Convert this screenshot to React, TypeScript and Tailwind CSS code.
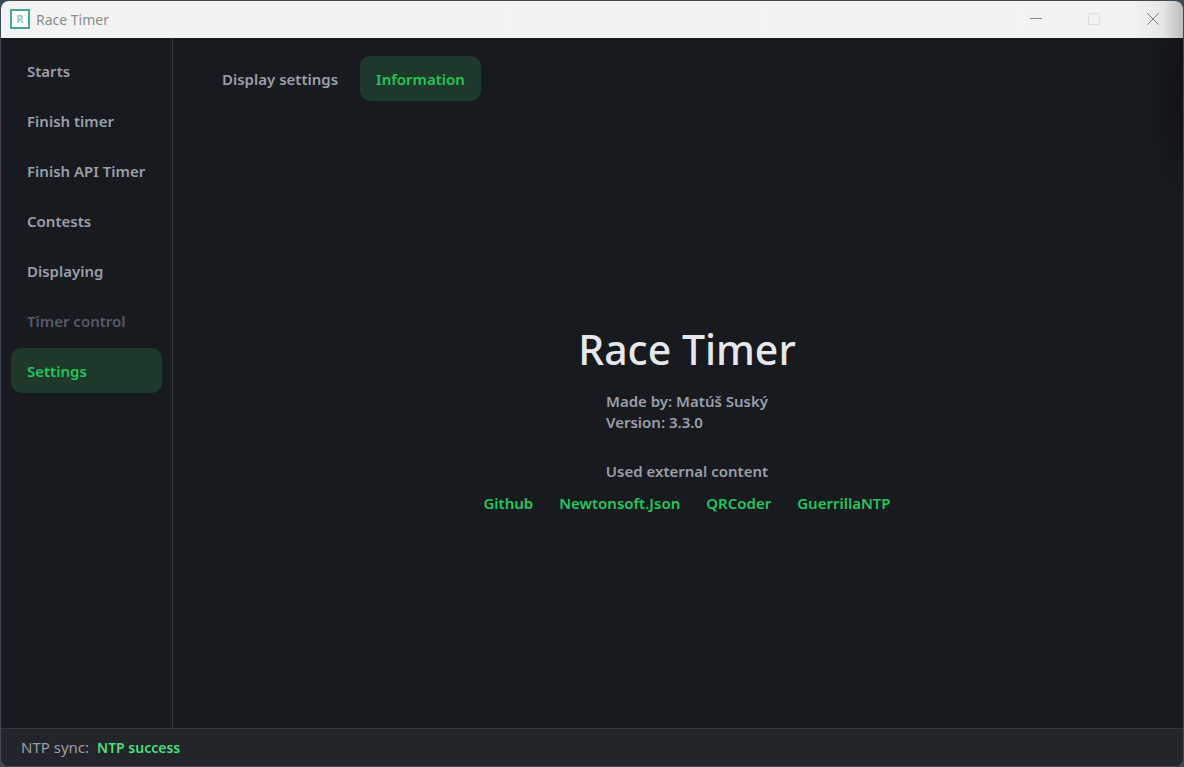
import { useState } from "react";

const navItems = [
  { label: "Starts" },
  { label: "Finish timer" },
  { label: "Finish API Timer" },
  { label: "Contests" },
  { label: "Displaying" },
  { label: "Timer control", disabled: true },
  { label: "Settings" },
];

const tabs = ["Display settings", "Information"];

const links = [
  { label: "Github", href: "https://github.com" },
  { label: "Newtonsoft.Json", href: "https://www.newtonsoft.com/json" },
  { label: "QRCoder", href: "https://github.com/codebude/QRCoder" },
  { label: "GuerrillaNTP", href: "https://guerrillantp.machinezoo.com" },
];

function TitleBar() {
  return (
    <header className="flex h-[37px] shrink-0 items-center bg-linear-to-l from-[#bcbcbc] via-[#e6e6e6] via-[20px] to-[#f3f3f3] to-[50px] pb-px pl-[9px]">
      <svg width="20" height="20" viewBox="0 0 20 20" aria-hidden="true">
        <rect x="1" y="1" width="18" height="18" fill="#fff" stroke="#43a897" strokeWidth="2" />
        <text
          x="10"
          y="14"
          textAnchor="middle"
          fontSize="11"
          fontWeight="700"
          fill="#8fcbbf"
          className="font-['Open_Sans',sans-serif]"
        >
          R
        </text>
      </svg>
      <span className="ml-[6px] text-[14px] font-normal text-[#8b8b8b]">Race Timer</span>
      <div className="ml-auto flex h-full">
        <button type="button" aria-label="Minimize" className="flex w-[58px] items-center justify-center">
          <svg width="12" height="12" viewBox="0 0 12 12">
            <path d="M0 5.5h12" stroke="#8a8a8a" />
          </svg>
        </button>
        <button type="button" aria-label="Maximize" disabled className="flex w-[58px] items-center justify-center">
          <svg width="12" height="12" viewBox="0 0 12 12">
            <rect x=".5" y=".5" width="11" height="11" rx="1" fill="none" stroke="#dedede" />
          </svg>
        </button>
        <button type="button" aria-label="Close" className="flex w-[60px] items-center justify-center">
          <svg width="12" height="12" viewBox="0 0 12 12">
            <path d="M.3.3l11.4 11.4M11.7.3L.3 11.7" stroke="#7c7c7c" />
          </svg>
        </button>
      </div>
    </header>
  );
}

export default function App() {
  const [page, setPage] = useState("Settings");
  const [tab, setTab] = useState("Information");

  return (
    <div className="flex h-screen bg-[#3f4a52] p-px font-['Noto_Sans','Open_Sans',sans-serif]">
      <div className="flex flex-1 flex-col overflow-hidden rounded-lg bg-[#171a1e] text-[15px] font-semibold text-[#9a9fa8]">
        <TitleBar />

        <div className="flex min-h-0 flex-1">
          <nav className="flex w-[172px] shrink-0 flex-col gap-[5px] border-r border-[#34383d] px-[10px] pt-[10px]">
            {navItems.map((item) => (
              <button
                key={item.label}
                type="button"
                disabled={item.disabled}
                onClick={() => setPage(item.label)}
                className={`h-[45px] rounded-[10px] px-4 pt-0.5 text-left whitespace-nowrap ${
                  page === item.label ? "bg-[#1e3829] text-[#22c55e]" : ""
                } disabled:text-[#565b65]`}
              >
                {item.label}
              </button>
            ))}
          </nav>

          <main className="flex flex-1 flex-col bg-[radial-gradient(ellipse_36px_110px_at_100%_8%,#111214,#171a1e)] pt-[18px] pr-[15px] pl-[33px]">
            <div className="flex gap-[6px]">
              {tabs.map((name) => (
                <button
                  key={name}
                  type="button"
                  onClick={() => setTab(name)}
                  className={`h-[45px] rounded-[10px] px-4 pt-0.5 ${
                    tab === name ? "bg-[#1e3829] text-[#22c55e]" : ""
                  }`}
                >
                  {name}
                </button>
              ))}
            </div>

            <section className="flex flex-1 flex-col items-center justify-center pt-2">
              <h1 className="text-[41px] leading-[52px] font-medium text-[#e6e7eb]">Race Timer</h1>
              <div className="mt-4 leading-[21px]">
                <p>Made by: Matúš Suský</p>
                <p>Version: 3.3.0</p>
              </div>
              <h2 className="mt-7 leading-[21px]">Used external content</h2>
              <div className="mt-[11px] flex gap-[26px] leading-[21px] text-[#22c55e]">
                {links.map((link) => (
                  <a key={link.label} href={link.href}>
                    {link.label}
                  </a>
                ))}
              </div>
            </section>
          </main>
        </div>

        <footer className="flex h-[38px] shrink-0 items-center gap-2 border-t border-[#34383d] bg-[#222529] px-5">
          <span className="font-normal">NTP sync:</span>
          <span className="text-[14px] text-[#4ade80]">NTP success</span>
        </footer>
      </div>
    </div>
  );
}
